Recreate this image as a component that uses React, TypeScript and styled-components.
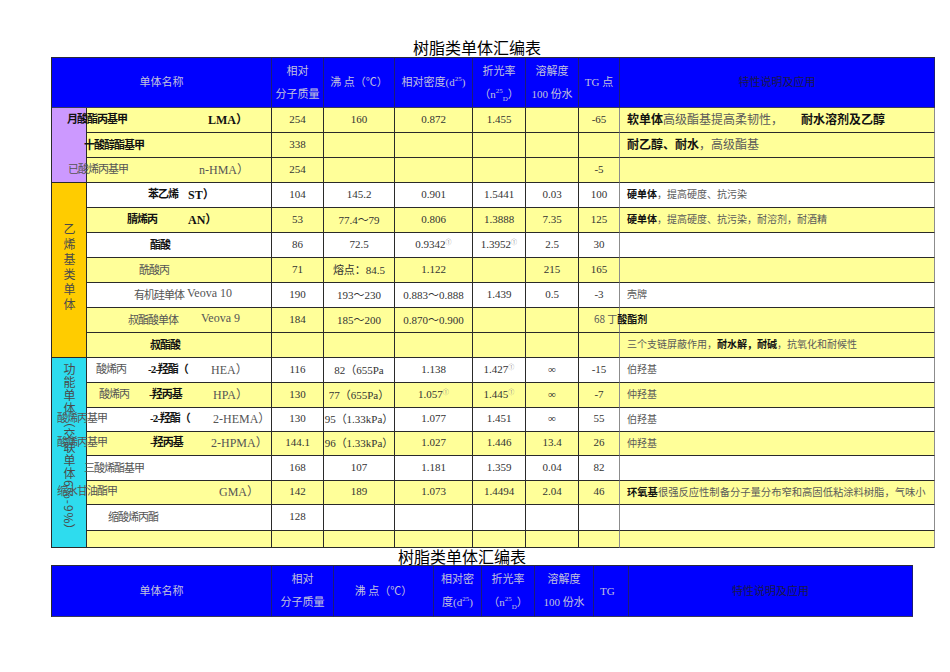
import React from "react";
import styled, { createGlobalStyle } from "styled-components";

const GlobalStyle = createGlobalStyle`
  html, body {
    margin: 0;
    padding: 0;
    background: #fff;
  }
  body {
    font-family: "Liberation Serif", "Noto Sans CJK SC", serif;
  }
`;

const Page = styled.div`
  width: 950px;
  height: 672px;
  padding: 38px 0 0 51px;
  box-sizing: border-box;
  overflow: hidden;
`;

const Title = styled.h1<{ $width: number; $height: number }>`
  margin: 0;
  width: ${(p) => p.$width}px;
  height: ${(p) => p.$height}px;
  line-height: ${(p) => p.$height}px;
  text-align: center;
  font-family: "Noto Sans CJK SC", sans-serif;
  font-weight: 400;
  font-size: 16px;
  color: #000;
`;

const Sheet = styled.table<{ $width: number }>`
  width: ${(p) => p.$width}px;
  table-layout: fixed;
  border-collapse: separate;
  border-spacing: 0;
  border-left: 1px solid #2a2a2a;
  border-top: 1px solid #2a2a3a;
`;

const HeadRow = styled.tr<{ $h: number }>`
  height: ${(p) => p.$h}px;
`;

const HeadCell = styled.th<{ $dark?: boolean; $align?: string }>`
  background: #0000ff;
  color: ${(p) => (p.$dark ? "#1a1a4a" : "#c2c2dc")};
  font-weight: 400;
  font-size: 11px;
  line-height: 23px;
  text-align: ${(p) => p.$align || "center"};
  padding: 0 ${(p) => (p.$align ? "6px" : "0")};
  border-right: 1px solid #1c1c78;
  border-bottom: 1px solid #3a3a5a;
  white-space: nowrap;

  sup {
    font-size: 7px;
    line-height: 0;
  }
  sub {
    font-size: 7px;
    line-height: 0;
  }
`;

const BodyRow = styled.tr<{ $h: number; $bg: string }>`
  height: ${(p) => p.$h}px;
  background: ${(p) => p.$bg};
`;

const Cell = styled.td<{ $line?: string }>`
  border-right: 1px solid ${(p) => p.$line || "#2a2a2a"};
  border-bottom: 1px solid #2a2a2a;
  padding: 0 0 3px;
  text-align: center;
  font-size: 11px;
  color: #333;
  white-space: nowrap;
`;

const NameCell = styled(Cell)`
  text-align: left;
`;

const DescCell = styled(Cell)`
  text-align: left;
  padding-left: 7px;
`;

const GroupCell = styled.td<{ $bg: string }>`
  background: ${(p) => p.$bg};
  border-right: 1px solid #2a2a2a;
  border-bottom: 1px solid #2a2a2a;
  padding: 0;
  text-align: center;
  vertical-align: middle;
`;

const GroupLabel = styled.span<{ $gap: number }>`
  display: inline-block;
  writing-mode: vertical-rl;
  font-family: "Noto Sans CJK SC", sans-serif;
  font-size: 12px;
  line-height: 14px;
  letter-spacing: ${(p) => p.$gap}px;
  color: #4a4a4a;
`;

const NameLine = styled.div<{ $x: number }>`
  display: flex;
  margin-left: ${(p) => p.$x}px;
`;

const NamePart = styled.span<{ $w?: number; $bold?: boolean; $latin?: boolean }>`
  flex: none;
  width: ${(p) => (p.$w ? `${p.$w}px` : "auto")};
  font-size: ${(p) => (p.$latin ? "12px" : "11px")};
  letter-spacing: ${(p) => (p.$latin ? "0" : "-1px")};
  font-weight: ${(p) => (p.$bold ? 700 : 400)};
  color: ${(p) => (p.$bold ? "#111" : "#555")};
`;

const DescLine = styled.div<{ $x: number; $size: number }>`
  margin-left: ${(p) => p.$x}px;
  font-size: ${(p) => p.$size}px;
  font-family: "Noto Sans CJK SC", sans-serif;
`;

const DescPart = styled.span<{ $bold?: boolean }>`
  font-weight: ${(p) => (p.$bold ? 700 : 400)};
  color: ${(p) => (p.$bold ? "#111" : "#5a5a5a")};
`;

const Mark = styled.sup`
  font-size: 6px;
  color: #888;
  line-height: 0;
  vertical-align: 4px;
`;

type Part = [number, string, boolean?];
type Seg = [string, boolean?];

type Row = {
  h: number;
  white?: boolean;
  name: Part[];
  vals: string[];
  desc?: Seg[];
  descX?: number;
  descSize?: number;
};

const rows: Row[] = [
  {
    h: 25,
    name: [[-20, "月酸酯丙基甲", true], [121, "LMA）", true]],
    vals: ["254", "160", "0.872", "1.455", "", "-65"],
    desc: [["软单体", true], ["高级酯基提高柔韧性，　　"], ["耐水溶剂及乙醇", true]],
    descSize: 12,
  },
  {
    h: 25,
    name: [[-3, "十酸醇酯基甲", true]],
    vals: ["338", "", "", "", "", ""],
    desc: [["耐乙醇、耐水", true], ["，高级酯基"]],
    descSize: 12,
  },
  {
    h: 25,
    name: [[-19, "已酸烯丙基甲"], [112, "n-HMA）"]],
    vals: ["254", "", "", "", "", "-5"],
  },
  {
    h: 25,
    white: true,
    name: [[61, "苯乙烯", true], [101, "ST）", true]],
    vals: ["104", "145.2", "0.901", "1.5441", "0.03", "100"],
    desc: [["硬单体", true], ["，提高硬度、抗污染"]],
  },
  {
    h: 25,
    name: [[40, "腈烯丙", true], [101, "AN）", true]],
    vals: ["53", "77.4～79", "0.806", "1.3888", "7.35", "125"],
    desc: [["硬单体", true], ["，提高硬度、抗污染，耐溶剂，耐酒精"]],
  },
  {
    h: 25,
    white: true,
    name: [[63, "酯酸", true]],
    vals: ["86", "72.5", "0.9342①", "1.3952①", "2.5", "30"],
  },
  {
    h: 25,
    name: [[52, "酰酸丙"]],
    vals: ["71", "熔点：84.5", "1.122", "", "215", "165"],
  },
  {
    h: 25,
    white: true,
    name: [[47, "有机硅单体"], [100, "Veova 10"]],
    vals: ["190", "193～230", "0.883～0.888", "1.439", "0.5", "-3"],
    desc: [["壳牌"]],
  },
  {
    h: 25,
    name: [[41, "叔酯酸单体"], [114, "Veova 9"]],
    vals: ["184", "185～200", "0.870～0.900", "", "", ""],
    desc: [["68 丁"], ["酸酯剂", true]],
    descX: -33,
  },
  {
    h: 25,
    name: [[63, "叔酯酸", true]],
    vals: ["", "", "", "", "", ""],
    desc: [["三个支链屏蔽作用，"], ["耐水解，耐碱", true], ["，抗氧化和耐候性"]],
  },
  {
    h: 25,
    white: true,
    name: [[9, "酸烯丙"], [61, "-2-羟酯（", true], [124, "HEA）"]],
    vals: ["116", "82（655Pa", "1.138", "1.427①", "∞", "-15"],
    desc: [["伯羟基"]],
  },
  {
    h: 25,
    name: [[12, "酸烯丙"], [62, "-羟丙基", true], [126, "HPA）"]],
    vals: ["130", "77（655Pa）", "1.057①", "1.445①", "∞", "-7"],
    desc: [["仲羟基"]],
  },
  {
    h: 24,
    white: true,
    name: [[-30, "酸烯丙基甲"], [63, "-2-羟酯（", true], [126, "2-HEMA）"]],
    vals: ["130", "95（1.33kPa）", "1.077", "1.451", "∞", "55"],
    desc: [["伯羟基"]],
  },
  {
    h: 24,
    name: [[-30, "酸烯丙基甲"], [63, "-羟丙基", true], [124, "2-HPMA）"]],
    vals: ["144.1", "96（1.33kPa）", "1.027", "1.446", "13.4", "26"],
    desc: [["仲羟基"]],
  },
  {
    h: 25,
    white: true,
    name: [[-3, "三酸烯酯基甲"]],
    vals: ["168", "107", "1.181", "1.359", "0.04", "82"],
  },
  {
    h: 24,
    name: [[-30, "缩水甘油酯甲"], [132, "GMA）"]],
    vals: ["142", "189", "1.073", "1.4494", "2.04", "46"],
    desc: [["环氧基", true], ["很强反应性制备分子量分布窄和高固低粘涂料树脂，气味小"]],
    descSize: 10.3,
  },
  {
    h: 26,
    white: true,
    name: [[21, "缩酸烯丙酯"]],
    vals: ["128", "", "", "", "", ""],
  },
  {
    h: 17,
    name: [],
    vals: ["", "", "", "", "", ""],
  },
];

const groups: Record<number, { span: number; bg: string; label?: string; gap?: number }> = {
  0: { span: 3, bg: "#cc99ff" },
  3: { span: 7, bg: "#ffcc00", label: "乙烯基类单体", gap: 3 },
  10: { span: 8, bg: "#2edcee", label: "功能单体（交联单体6%-9%）", gap: 1 },
};

const isLatin = (t: string) => /^[\x00-\x7f]/.test(t) && !/[\u4e00-\u9fff]/.test(t);

const Value = ({ v }: { v: string }) =>
  v.endsWith("①") ? (
    <>
      {v.slice(0, -1)}
      <Mark>①</Mark>
    </>
  ) : (
    <>{v}</>
  );

const Name = ({ parts }: { parts: Part[] }) => {
  if (!parts.length) return null;
  return (
    <NameLine $x={parts[0][0]}>
      {parts.map((p, i) => (
        <NamePart
          key={i}
          $bold={p[2]}
          $latin={isLatin(p[1])}
          $w={i < parts.length - 1 ? parts[i + 1][0] - p[0] : undefined}
        >
          {p[1]}
        </NamePart>
      ))}
    </NameLine>
  );
};

const FirstTable = () => (
  <Sheet $width={884}>
    <colgroup>
      {[35, 185, 52, 71, 78, 53, 53, 41, 315].map((w, i) => (
        <col key={i} style={{ width: w }} />
      ))}
    </colgroup>
    <tbody>
      <HeadRow $h={50}>
        <HeadCell colSpan={2}>单体名称</HeadCell>
        <HeadCell>
          相对
          <br />
          分子质量
        </HeadCell>
        <HeadCell>沸 点（℃）</HeadCell>
        <HeadCell>
          相对密度(d<sup>25</sup>)
        </HeadCell>
        <HeadCell>
          折光率
          <br />
          （n<sup>25</sup>
          <sub>D</sub>）
        </HeadCell>
        <HeadCell>
          溶解度
          <br />
          100 份水
        </HeadCell>
        <HeadCell>TG 点</HeadCell>
        <HeadCell $dark>特性说明及应用</HeadCell>
      </HeadRow>
      {rows.map((r, idx) => {
        const g = groups[idx];
        return (
          <BodyRow key={idx} $h={r.h} $bg={r.white ? "#ffffff" : "#ffff99"}>
            {g && (
              <GroupCell rowSpan={g.span} $bg={g.bg}>
                {g.label && <GroupLabel $gap={g.gap || 0}>{g.label}</GroupLabel>}
              </GroupCell>
            )}
            <NameCell>
              <Name parts={r.name} />
            </NameCell>
            {r.vals.map((v, i) => (
              <Cell key={i} $line={i === 5 ? "#8c8c8c" : undefined}>
                <Value v={v} />
              </Cell>
            ))}
            <DescCell $line="#8c8c8c">
              {r.desc && (
                <DescLine $x={r.descX || 0} $size={r.descSize || 10}>
                  {r.desc.map((s, i) => (
                    <DescPart key={i} $bold={s[1]}>
                      {s[0]}
                    </DescPart>
                  ))}
                </DescLine>
              )}
            </DescCell>
          </BodyRow>
        );
      })}
    </tbody>
  </Sheet>
);

const SecondTable = () => (
  <Sheet $width={862}>
    <colgroup>
      {[220, 62, 100, 48, 53, 59, 35, 284].map((w, i) => (
        <col key={i} style={{ width: w }} />
      ))}
    </colgroup>
    <tbody>
      <HeadRow $h={51}>
        <HeadCell>单体名称</HeadCell>
        <HeadCell>
          相对
          <br />
          分子质量
        </HeadCell>
        <HeadCell>沸 点（℃）</HeadCell>
        <HeadCell>
          相对密
          <br />
          度(d<sup>25</sup>)
        </HeadCell>
        <HeadCell>
          折光率
          <br />
          （n<sup>25</sup>
          <sub>D</sub>）
        </HeadCell>
        <HeadCell>
          溶解度
          <br />
          100 份水
        </HeadCell>
        <HeadCell $align="left">TG</HeadCell>
        <HeadCell $dark>特性说明及应用</HeadCell>
      </HeadRow>
    </tbody>
  </Sheet>
);

export default function App() {
  return (
    <Page>
      <GlobalStyle />
      <Title $width={852} $height={19}>
        树脂类单体汇编表
      </Title>
      <FirstTable />
      <Title $width={822} $height={17}>
        树脂类单体汇编表
      </Title>
      <SecondTable />
    </Page>
  );
}
